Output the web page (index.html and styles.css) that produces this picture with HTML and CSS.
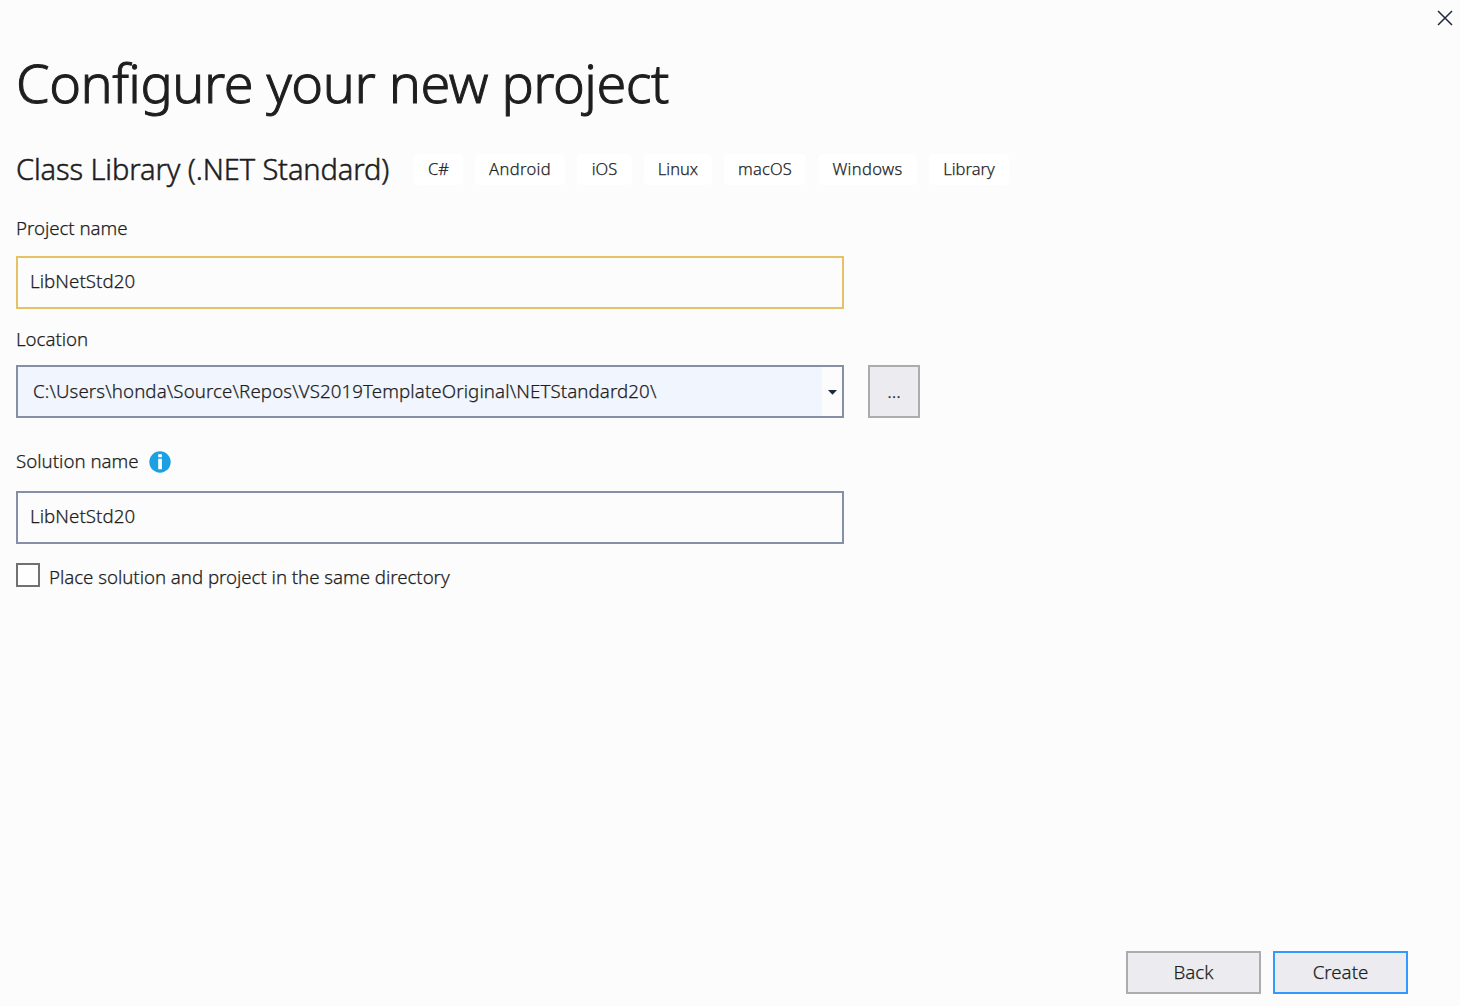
FILE: index.html
```html
<!DOCTYPE html>
<html lang="en">
<head>
<meta charset="utf-8">
<title>Configure your new project</title>
<link rel="stylesheet" href="styles.css">
</head>
<body>
<main class="dialog">
  <header class="titlebar">
    <button class="close" aria-label="Close"><svg width="16" height="16" viewBox="0 0 16 16"><path d="M1 1L15 15M15 1L1 15" fill="none" stroke="#1e2a3c" stroke-width="1.5"/></svg></button>
  </header>
  <h1 class="title">Configure your new project</h1>
  <div class="template">
    <h2 class="template-name">Class Library (.NET Standard)</h2>
    <ul class="tags">
      <li class="tag tag-cs">C#</li>
      <li class="tag tag-android">Android</li>
      <li class="tag tag-ios">iOS</li>
      <li class="tag tag-linux">Linux</li>
      <li class="tag tag-macos">macOS</li>
      <li class="tag tag-windows">Windows</li>
      <li class="tag tag-library">Library</li>
    </ul>
  </div>
  <div class="label label-project">Project name</div>
  <div class="field field-focus">LibNetStd20</div>
  <div class="label label-location">Location</div>
  <div class="location">
    <div class="combo">
      <div class="combo-value">C:\Users\honda\Source\Repos\VS2019TemplateOriginal\NETStandard20\</div>
      <div class="combo-arrow"><svg width="9" height="5" viewBox="0 0 9 5"><path d="M0 0H9L4.5 4.7Z" fill="#1b293e"/></svg></div>
    </div>
    <button class="button browse">...</button>
  </div>
  <div class="label label-solution"><span class="solution-text">Solution name</span>
    <svg class="info" width="22" height="22" viewBox="0 0 22 22"><circle cx="11" cy="11" r="10.7" fill="#1ba1e2"/><path d="M9.2 3.2H12.9V6.3H9.2ZM9.2 7.8H12.9V18.2H9.2Z" fill="#fff"/></svg>
  </div>
  <div class="field">LibNetStd20</div>
  <div class="check"><i class="checkbox"></i><span class="check-text">Place solution and project in the same directory</span></div>
  <footer class="actions">
    <button class="button action">Back</button>
    <button class="button action primary">Create</button>
  </footer>
</main>
</body>
</html>
```
FILE: styles.css
```css
* { box-sizing: border-box; }
body {
  margin: 0;
  background: #fcfcfc;
  color: #1e1e1e;
  font-family: "Noto Sans", "Open Sans", sans-serif;
  font-size: 18.7px;
  font-weight: 300;
  -webkit-text-stroke: 0.25px #1e1e1e;
}
.dialog { display: flex; flex-direction: column; width: 1460px; height: 1006px; padding: 0 16px 12px; }
.titlebar { display: flex; justify-content: flex-end; height: 45px; margin-right: -9px; padding-top: 10px; }
.close { width: 16px; height: 16px; padding: 0; border: 0; background: none; }
.close svg { display: block; }
.title { height: 74px; margin: 0; font-size: 54px; line-height: 74px; font-weight: 300; letter-spacing: -0.5px; white-space: nowrap; -webkit-text-stroke-width: 1px; }
.template { display: flex; align-items: center; height: 40px; margin-top: 30px; }
.template-name { flex: none; width: 398px; margin: 0; font-size: 29px; font-weight: 300; line-height: 40px; letter-spacing: -0.1px; white-space: nowrap; -webkit-text-stroke-width: 0.5px; }
.tags { display: flex; gap: 12px; margin: 1px 0 0; padding: 0; list-style: none; }
.tag { height: 31px; border-radius: 5px; background: #fff; font-size: 16.5px; line-height: 29px; text-align: center; white-space: nowrap; }
.tag-cs { width: 49px; }
.tag-android { width: 90px; letter-spacing: 0.35px; }
.tag-ios { width: 55px; }
.tag-linux { width: 68px; }
.tag-macos { width: 82px; letter-spacing: 0.15px; }
.tag-windows { width: 99px; letter-spacing: 0.35px; }
.tag-library { width: 80px; }
.label { display: flex; align-items: center; height: 26px; letter-spacing: -0.04px; white-space: nowrap; }
.label-project { margin: 25px 0 16px; }
.label-location { margin: 16px 0 14px; }
.label-solution { margin: 31px 0 16px; }
.solution-text { padding-bottom: 3px; letter-spacing: 0; }
.info { margin-left: 10px; }
.field { width: 828px; height: 53px; border: 2px solid #858fa5; padding-left: 12px; line-height: 46px; letter-spacing: 0.06px; }
.field-focus { border-color: #e5c365; }
.location { display: flex; gap: 24px; }
.combo { display: flex; width: 828px; height: 53px; border: 2px solid #8591a2; }
.combo-value { flex: 1; padding-left: 15px; background: #f1f5fe; line-height: 47px; letter-spacing: 0.1px; white-space: nowrap; }
.combo-arrow { display: flex; align-items: center; justify-content: center; width: 20px; padding-top: 2px; }
.button { padding: 0 0 2px; border: 2px solid #acacac; border-radius: 0; background: #ececf0; color: #1e1e1e; font: inherit; -webkit-text-stroke: inherit; }
.browse { width: 52px; height: 53px; }
.check { display: flex; align-items: center; height: 28px; margin-top: 18px; }
.checkbox { width: 24px; height: 24px; margin-bottom: 2px; border: 2px solid #717171; background: #fefefe; }
.check-text { margin-left: 9px; letter-spacing: -0.04px; }
.actions { display: flex; justify-content: flex-end; gap: 12px; margin: auto 36px 0 0; }
.action { width: 135px; height: 43px; }
.primary { border-color: #3399ff; }
```
